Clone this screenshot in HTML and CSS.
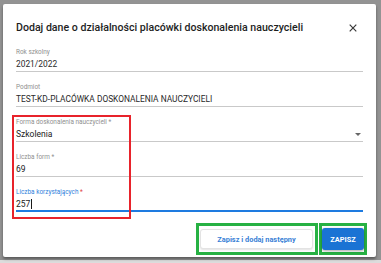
FILE: index.html
```html
<!DOCTYPE html>
<html lang="pl">
<head>
<meta charset="utf-8">
<link rel="stylesheet" href="styles.css">
</head>
<body>
<div class="dialog">
  <div class="header">
    <h1 class="title">Dodaj dane o działalności placówki doskonalenia nauczycieli</h1>
    <svg class="close" width="8" height="8" viewBox="0 0 8 8"><path d="M0.7 0.7L7.3 7.3M7.3 0.7L0.7 7.3" stroke="#3a3a3a" stroke-width="1.2"/></svg>
  </div>
  <div class="fields">
    <div class="field">
      <div class="label">Rok szkolny</div>
      <div class="value">2021/2022</div>
    </div>
    <div class="field">
      <div class="label">Podmiot</div>
      <div class="value">TEST-KD-PLACÓWKA DOSKONALENIA NAUCZYCIELI</div>
    </div>
    <div class="field select">
      <div class="label">Forma doskonalenia nauczycieli *</div>
      <div class="value dark">Szkolenia<span class="arrow"></span></div>
    </div>
    <div class="field">
      <div class="label">Liczba form *</div>
      <div class="value dark">69</div>
    </div>
    <div class="field focused">
      <div class="label">Liczba korzystających <span class="req">*</span></div>
      <div class="value dark">257<span class="caret"></span></div>
    </div>
    <div class="mark-red"></div>
  </div>
  <div class="actions">
    <div class="mark-green mark-wide"><button class="btn btn-outline">Zapisz i dodaj następny</button></div>
    <div class="mark-green mark-narrow"><button class="btn btn-primary">ZAPISZ</button></div>
  </div>
</div>
</body>
</html>
```
FILE: styles.css
```css
html, body {
  margin: 0;
  padding: 0;
}
body {
  width: 381px;
  height: 263px;
  overflow: hidden;
  background: linear-gradient(to bottom, #939393 0, #939393 260px, #dcdcdc 260px);
  font-family: Roboto, "Liberation Sans", sans-serif;
  padding: 4px 0 0 3px;
  box-sizing: border-box;
}
.dialog {
  width: 373px;
  height: 253px;
  background: #fff;
  border-radius: 2px;
  box-shadow: 0 2px 3px rgba(0,0,0,0.4);
  display: flex;
  flex-direction: column;
  box-sizing: border-box;
}
.header {
  display: flex;
  align-items: center;
  justify-content: space-between;
  padding: 16px 19px 12px 13px;
  height: 16px;
}
.title {
  margin: 0;
  font-size: 10.6px;
  font-weight: 500;
  line-height: 16px;
  color: #1e1e1e;
  white-space: nowrap;
}
.close {
  display: block;
  flex: none;
}
.fields {
  position: relative;
  padding: 0 13px;
  display: flex;
  flex-direction: column;
  gap: 11px;
}
.field {
  border-bottom: 1px solid #c9c9c9;
  display: flex;
  flex-direction: column;
}
.label {
  font-size: 6.4px;
  line-height: 8px;
  height: 8px;
  color: #8f8f8f;
  white-space: nowrap;
}
.value {
  margin-top: 2px;
  font-size: 8.4px;
  line-height: 13px;
  height: 13px;
  color: #2a2a2a;
  white-space: nowrap;
  position: relative;
  display: flex;
  align-items: center;
}
.value.dark {
  font-size: 8.5px;
  color: #1a1a1a;
}
.arrow {
  position: absolute;
  right: 2px;
  top: 5px;
  width: 0;
  height: 0;
  border-left: 3px solid transparent;
  border-right: 3px solid transparent;
  border-top: 3px solid #666;
}
.focused {
  border-bottom: 2px solid #1e7be0;
}
.focused .label {
  color: #2f7fdc;
}
.focused .value {
  height: 12px;
  line-height: 12px;
}
.req {
  color: #e04545;
}
.caret {
  display: inline-block;
  width: 1px;
  height: 10px;
  background: #1a1a1a;
  margin-left: 1px;
}
.mark-red {
  position: absolute;
  left: 9px;
  top: 67px;
  width: 115px;
  height: 100px;
  border: 2px solid #e8232b;
  pointer-events: none;
}
.actions {
  display: flex;
  justify-content: flex-end;
  align-items: flex-start;
  gap: 1px;
  padding: 11px 9px 0 0;
}
.mark-green {
  border: 3px solid #27b143;
  display: flex;
  align-items: center;
  height: 26px;
}
.mark-wide {
  padding: 0 2px 0 1px;
}
.mark-narrow {
  padding: 0;
}
.btn {
  font-family: Roboto, "Liberation Sans", sans-serif;
  font-weight: 700;
  font-size: 7.4px;
  border-radius: 3px;
  cursor: pointer;
  padding: 0;
}
.btn-outline {
  width: 113px;
  height: 20px;
  background: #fff;
  color: #3a7fd6;
  border: 1px solid #e3e3e3;
  box-shadow: 0 1px 2px rgba(0,0,0,0.12);
}
.btn-primary {
  width: 42px;
  height: 22px;
  background: #1a73d4;
  color: #fff;
  border: none;
  box-shadow: 0 1px 3px rgba(0,0,0,0.35);
}
```
